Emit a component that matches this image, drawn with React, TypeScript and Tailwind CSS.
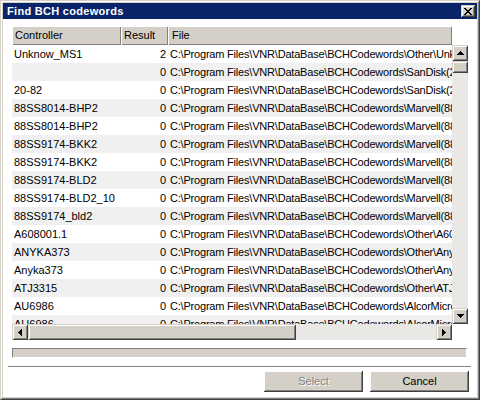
import React from 'react';

const BASE = 'C:\\Program Files\\VNR\\DataBase\\BCHCodewords\\';

const rows = [
  { name: 'Unknow_MS1', result: 2, file: 'Other\\Unknown\\Unknow_MS1.bch' },
  { name: '', result: 0, file: 'SanDisk(20-82)\\SanDisk_blank.bch' },
  { name: '20-82', result: 0, file: 'SanDisk(20-82)\\20-82.bch' },
  { name: '88SS8014-BHP2', result: 0, file: 'Marvell(88SS8014)\\88SS8014-BHP2.bch' },
  { name: '88SS8014-BHP2', result: 0, file: 'Marvell(88SS8014)\\88SS8014-BHP2_1.bch' },
  { name: '88SS9174-BKK2', result: 0, file: 'Marvell(88SS9174)\\88SS9174-BKK2.bch' },
  { name: '88SS9174-BKK2', result: 0, file: 'Marvell(88SS9174)\\88SS9174-BKK2_1.bch' },
  { name: '88SS9174-BLD2', result: 0, file: 'Marvell(88SS9174)\\88SS9174-BLD2.bch' },
  { name: '88SS9174-BLD2_10', result: 0, file: 'Marvell(88SS9174)\\88SS9174-BLD2_10.bch' },
  { name: '88SS9174_bld2', result: 0, file: 'Marvell(88SS9174)\\88SS9174_bld2.bch' },
  { name: 'A608001.1', result: 0, file: 'Other\\A608001.1.bch' },
  { name: 'ANYKA373', result: 0, file: 'Other\\Anyka\\ANYKA373.bch' },
  { name: 'Anyka373', result: 0, file: 'Other\\Anyka\\Anyka373.bch' },
  { name: 'ATJ3315', result: 0, file: 'Other\\ATJ3315.bch' },
  { name: 'AU6986', result: 0, file: 'AlcorMicro\\AU6986.bch' },
  { name: 'AU6986', result: 0, file: 'AlcorMicro\\AU6986_1.bch' },
];

// classic raised bevel used by scroll arrows / thumbs
const raised =
  'bg-[#d4d0c8] shadow-[inset_1px_1px_0_#d4d0c8,inset_-1px_-1px_0_#404040,inset_2px_2px_0_#ffffff,inset_-2px_-2px_0_#808080]';

const Pixels: React.FC<{ w: number; h: number; px: [number, number, number, number][] }> = ({ w, h, px }) => (
  <svg width={w} height={h} viewBox={`0 0 ${w} ${h}`} shapeRendering="crispEdges">
    {px.map(([x, y, rw, rh], i) => (
      <rect key={i} x={x} y={y} width={rw} height={rh} fill="#000" />
    ))}
  </svg>
);

const UpArrow = () => <Pixels w={7} h={4} px={[[3, 0, 1, 1], [2, 1, 3, 1], [1, 2, 5, 1], [0, 3, 7, 1]]} />;
const DownArrow = () => <Pixels w={7} h={4} px={[[0, 0, 7, 1], [1, 1, 5, 1], [2, 2, 3, 1], [3, 3, 1, 1]]} />;
const LeftArrow = () => <Pixels w={4} h={7} px={[[3, 0, 1, 7], [2, 1, 1, 5], [1, 2, 1, 3], [0, 3, 1, 1]]} />;
const RightArrow = () => <Pixels w={4} h={7} px={[[0, 0, 1, 7], [1, 1, 1, 5], [2, 2, 1, 3], [3, 3, 1, 1]]} />;
const CloseGlyph = () => (
  <Pixels
    w={8}
    h={7}
    px={[
      [0, 0, 2, 1], [6, 0, 2, 1],
      [1, 1, 2, 1], [5, 1, 2, 1],
      [2, 2, 4, 1],
      [3, 3, 2, 1],
      [2, 4, 4, 1],
      [1, 5, 2, 1], [5, 5, 2, 1],
      [0, 6, 2, 1], [6, 6, 2, 1],
    ]}
  />
);

const ArrowBtn: React.FC<{ children: React.ReactNode }> = ({ children }) => (
  <div className={`w-[16px] h-[16px] shrink-0 flex items-center justify-center ${raised}`}>{children}</div>
);

const headerCell =
  'h-full shrink-0 flex items-center shadow-[inset_1px_1px_0_#ffffff,inset_-1px_-1px_0_#808080]';

export default function App() {
  return (
    <div className="w-[480px] h-[400px] font-['Liberation_Sans',Arial,sans-serif] text-[11px] leading-none text-black select-none">
      <div className="h-full border border-t-[#d4d0c8] border-l-[#d4d0c8] border-r-[#404040] border-b-[#404040]">
        <div className="h-full border border-t-white border-l-white border-r-[#808080] border-b-[#808080]">
          <div className="h-full p-px bg-[#d4d0c8] flex flex-col">
            {/* Title bar */}
            <div className="h-[16px] shrink-0 bg-[#0a246a] flex items-center justify-between pl-[4px] pr-[2px]">
              <span className="text-white font-bold text-[11px] tracking-[0.3px]">Find BCH codewords</span>
              <div className={`w-[14px] h-[12px] flex items-center justify-center ${raised}`}>
                <CloseGlyph />
              </div>
            </div>

            {/* Client */}
            <div className="flex-1 bg-white flex flex-col">
              <div className="pl-[9px] pt-[7px]">
                <div className="w-[456px] h-[314px] flex flex-col">
                  {/* Header */}
                  <div className="h-[19px] flex shrink-0">
                    <div className="w-[440px] flex bg-[#d4d0c8] overflow-hidden">
                      <div className={`w-[109px] pl-[3px] ${headerCell}`}>Controller</div>
                      <div className={`w-[47px] pl-[3px] ${headerCell}`}>Result</div>
                      <div className={`flex-1 pl-[4px] ${headerCell}`}>File</div>
                    </div>
                    <div className="w-[16px] bg-white" />
                  </div>

                  {/* Body */}
                  <div className="h-[279px] flex shrink-0">
                    <div className="w-[440px] overflow-hidden">
                      {rows.map((r, i) => (
                        <div
                          key={i}
                          className={`h-[18px] flex items-center ${i % 2 ? 'bg-[#f0f0f0]' : 'bg-white'}`}
                        >
                          <div className="w-[109px] shrink-0 pl-[2px] whitespace-nowrap overflow-hidden">{r.name}</div>
                          <div className="w-[47px] shrink-0 pr-[2px] text-right">{r.result}</div>
                          <div className="pl-[2px] whitespace-nowrap tracking-[-0.2px]">{BASE + r.file}</div>
                        </div>
                      ))}
                    </div>
                    <div className="w-[16px] flex flex-col bg-[#eae8e4]">
                      <ArrowBtn>
                        <UpArrow />
                      </ArrowBtn>
                      <div className={`h-[12px] ${raised}`} />
                      <div className="flex-1" />
                      <ArrowBtn>
                        <DownArrow />
                      </ArrowBtn>
                    </div>
                  </div>

                  {/* Horizontal scrollbar */}
                  <div className="h-[16px] flex shrink-0">
                    <div className="w-[440px] flex bg-[#eae8e4]">
                      <ArrowBtn>
                        <LeftArrow />
                      </ArrowBtn>
                      <div className={`w-[268px] h-[16px] ${raised}`} />
                      <div className="flex-1" />
                      <ArrowBtn>
                        <RightArrow />
                      </ArrowBtn>
                    </div>
                    <div className="w-[16px] bg-white" />
                  </div>
                </div>
              </div>

              {/* Progress bar */}
              <div className="pl-[9px] mt-[8px]">
                <div className="w-[455px] h-[10px] bg-[#d4d0c8] border border-t-[#808080] border-l-[#808080] border-r-white border-b-white" />
              </div>

              {/* Separator */}
              <div className="pl-[5px] mt-[8px]">
                <div className="w-[463px] h-[2px] border-t border-t-[#808080] border-b border-b-white" />
              </div>

              {/* Buttons */}
              <div className="mt-[3px] flex justify-end gap-[7px] pr-[8px]">
                <button
                  disabled
                  className="w-[99px] h-[21px] bg-[#d4d0c8] text-[#808080] [text-shadow:1px_1px_0_#ffffff] shadow-[inset_-1px_-1px_0_#404040,inset_1px_1px_0_#ffffff,inset_-2px_-2px_0_#808080]"
                >
                  Select
                </button>
                <button className="w-[99px] h-[21px] bg-[#d4d0c8] text-black shadow-[inset_-1px_-1px_0_#404040,inset_1px_1px_0_#ffffff,inset_-2px_-2px_0_#808080]">
                  Cancel
                </button>
              </div>
            </div>
          </div>
        </div>
      </div>
    </div>
  );
}
